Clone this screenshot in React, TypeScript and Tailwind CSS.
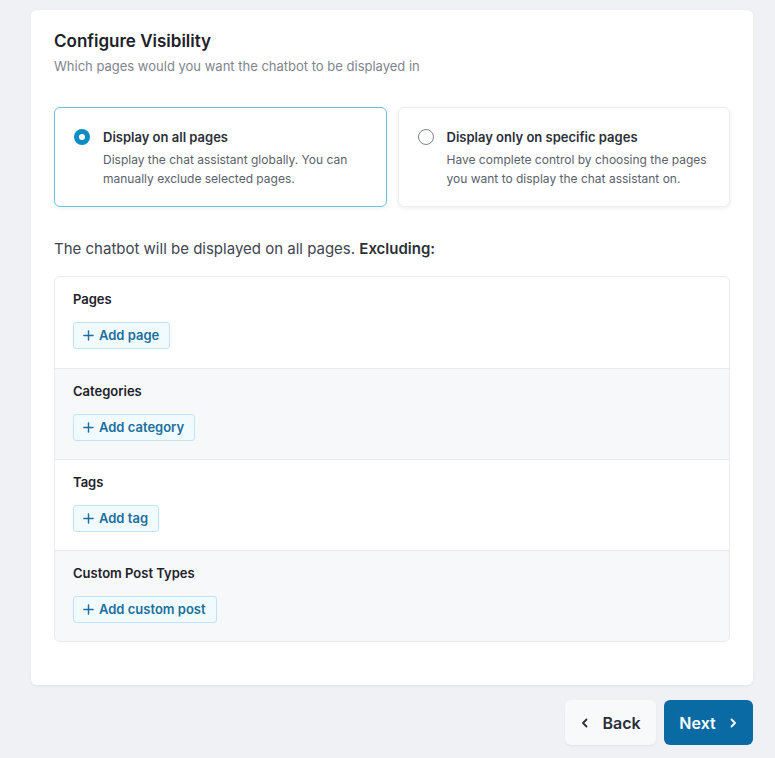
import React, { useState } from 'react';

const sections = [
  { label: 'Pages', button: 'Add page', shaded: false },
  { label: 'Categories', button: 'Add category', shaded: true },
  { label: 'Tags', button: 'Add tag', shaded: false },
  { label: 'Custom Post Types', button: 'Add custom post', shaded: true },
];

const Plus = () => (
  <svg width="11" height="11" viewBox="0 0 12 12" fill="none" stroke="currentColor" strokeWidth="1.6" strokeLinecap="round">
    <path d="M6 1v10M1 6h10" />
  </svg>
);

const Chevron = ({ dir }: { dir: 'left' | 'right' }) => (
  <svg width="10" height="10" viewBox="0 0 10 10" fill="none" stroke="currentColor" strokeWidth="1.8" strokeLinecap="round" strokeLinejoin="round">
    {dir === 'left' ? <path d="M6.5 1.5 3 5l3.5 3.5" /> : <path d="M3.5 1.5 7 5 3.5 8.5" />}
  </svg>
);

const App: React.FC = () => {
  const [mode, setMode] = useState<'all' | 'specific'>('all');

  const radioCard = (value: 'all' | 'specific', title: string, desc: string) => {
    const active = mode === value;
    return (
      <button
        onClick={() => setMode(value)}
        className={`flex-1 text-left flex items-start gap-[13px] rounded-md bg-white pl-[19px] pr-4 pt-[19px] pb-[18px] shadow-[0_1px_4px_rgba(16,24,40,0.08)] border ${
          active ? 'border-[#6cc1e3]' : 'border-[#ebedf0]'
        }`}
      >
        <span className="mt-[2px] shrink-0">
          {active ? (
            <span className="w-4 h-4 rounded-full bg-[#0e8cc4] flex items-center justify-center">
              <span className="w-[6px] h-[6px] rounded-full bg-white" />
            </span>
          ) : (
            <span className="block w-4 h-4 rounded-full border-[1.5px] border-[#7d8590] bg-white" />
          )}
        </span>
        <span className="flex flex-col">
          <span className="text-[13px] leading-5 font-semibold text-[#2b2f38]">{title}</span>
          <span className="mt-[3px] text-[12px] leading-[19px] text-[#5b616b]">{desc}</span>
        </span>
      </button>
    );
  };

  return (
    <div className="min-h-[758px] w-[775px] bg-[#f0f1f4] pt-[10px] pl-[31px] pr-[22px] pb-3 font-['Inter','Noto_Sans',sans-serif]">
      <div className="bg-white rounded-md shadow-[0_1px_3px_rgba(16,24,40,0.07)] px-[23px] pt-[19px] pb-[43px]">
        <h1 className="text-[17px] leading-6 font-semibold text-[#1d2129]">Configure Visibility</h1>
        <p className="mt-[3px] text-[13px] leading-5 text-[#80858f]">
          Which pages would you want the chatbot to be displayed in
        </p>

        <div className="mt-[31px] flex gap-[11px]">
          {radioCard(
            'all',
            'Display on all pages',
            'Display the chat assistant globally. You can manually exclude selected pages.'
          )}
          {radioCard(
            'specific',
            'Display only on specific pages',
            'Have complete control by choosing the pages you want to display the chat assistant on.'
          )}
        </div>

        <p className="mt-[31px] text-[15px] leading-[21px] text-[#40454f]">
          The chatbot will be displayed on all pages. <span className="font-semibold text-[#2b2f38]">Excluding:</span>
        </p>

        <div className="mt-[17px] border border-[#e8eaee] rounded-md overflow-hidden">
          {sections.map((s, i) => (
            <div
              key={s.label}
              className={`h-[91px] pl-[18px] pt-3 ${s.shaded ? 'bg-[#f7f8fa]' : 'bg-white'} ${
                i > 0 ? 'border-t border-[#e8eaee]' : ''
              }`}
            >
              <div className="text-[13px] leading-5 font-semibold text-[#1d2129]">{s.label}</div>
              <button className="mt-[13px] h-[27px] pl-[9px] pr-[10px] flex items-center gap-[5px] rounded-[3px] border border-[#bfe4f6] bg-[#f1faff] text-[13px] font-semibold text-[#1b6f9c]">
                <Plus />
                {s.button}
              </button>
            </div>
          ))}
        </div>
      </div>

      <div className="mt-[15px] flex justify-end gap-2">
        <button className="w-[91px] h-[45px] rounded-md bg-[#f8f9fb] shadow-[0_1px_2px_rgba(16,24,40,0.06)] flex items-center justify-center gap-[12px] text-[16px] font-semibold text-[#2b2f38]">
          <Chevron dir="left" />
          Back
        </button>
        <button className="w-[89px] h-[45px] rounded-md bg-[#0a6aa3] flex items-center justify-center gap-[12px] text-[16px] font-semibold text-white">
          Next
          <Chevron dir="right" />
        </button>
      </div>
    </div>
  );
};

export default App;
